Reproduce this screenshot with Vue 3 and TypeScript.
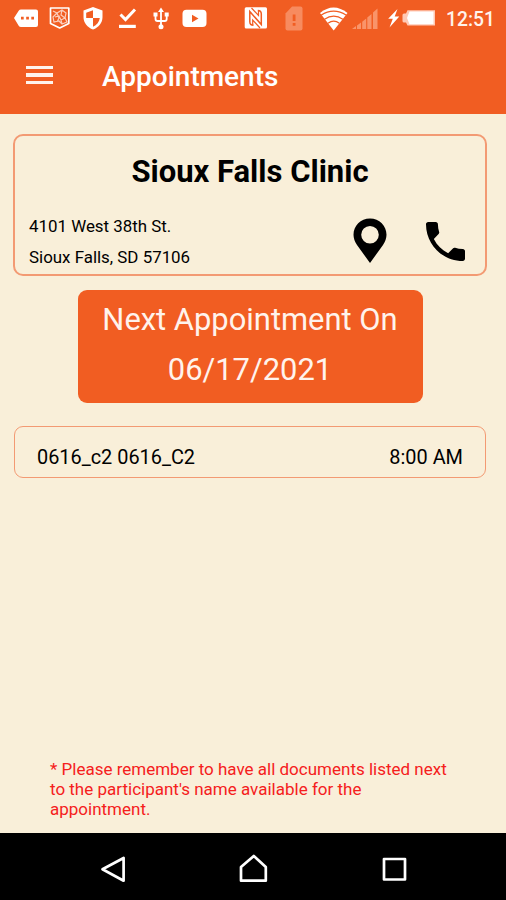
<script setup lang="ts">
import { ref } from 'vue'

interface Clinic {
  name: string
  street: string
  city: string
}

interface Appointment {
  participant: string
  time: string
}

const clinic: Clinic = {
  name: 'Sioux Falls Clinic',
  street: '4101 West 38th St.',
  city: 'Sioux Falls, SD 57106',
}
const nextDate = ref('06/17/2021')
const appointments = ref<Appointment[]>([{ participant: '0616_c2 0616_C2', time: '8:00 AM' }])
</script>

<template>
  <div class="screen">
    <div class="status">
      <div class="status-left">
        <svg width="24" height="38" viewBox="14 0 24 38">
          <path fill="#fff" d="M21 9.500h15a2 2 0 0 1 2 2v13.500a2 2 0 0 1-2 2H21q-1.500 0-2.300-1.300L14 18l4.700-7.200Q19.500 9.500 21 9.500z" />
          <path fill="#f15d22" d="M21 16.700h2.700v2.700H21zM26.200 16.700h2.700v2.700h-2.700zM31.300 16.700H34v2.700h-2.700z" />
        </svg>
        <svg width="22" height="38" viewBox="49 0 22 38">
          <path fill="none" stroke="#fff" stroke-width="1.700" stroke-linejoin="round" d="M50.500 8h18.300v15.500L59.700 28l-9.200-4.500z" />
          <path fill="none" stroke="#fff" stroke-opacity=".7" stroke-width="1.200" d="M53 11l4 2 5-3 4 3-1 5 2 4-5 2-3-3-5 1-1-5 4-4M57 13l2 5-2 4M62 10l-1 5 4 3-4 2-2-4-4 1M61 20l1 4" />
        </svg>
        <svg width="20" height="38" viewBox="83 0 20 38">
          <path fill="#fff" d="M93 7l9.500 3.500V17c0 6-4 10.500-9.500 12.500C87.500 27.500 83.500 23 83.500 17v-6.500z" />
          <path fill="#f15d22" d="M93 10.200V18h-6.800v-5.200zM93 18h6.800c-.5 4-3 7-6.800 8.700z" />
        </svg>
        <svg width="20" height="38" viewBox="118 0 20 38">
          <path fill="none" stroke="#fff" stroke-width="3" d="M120.500 14.500l5 5 9.500-10" />
          <path fill="#fff" d="M119 24.800h16.800V28H119z" />
        </svg>
        <svg width="17" height="38" viewBox="153 0 17 38">
          <path fill="none" stroke="#fff" stroke-width="1.800" d="M161 10v17M155.500 14.500V19q0 2 2 2h7.200q2 0 2-2v-4" />
          <path fill="#fff" d="M161 7.500l3 4.500h-6z M153.500 12.500h4v4h-4zM164.700 12.500h4v4h-4z" />
          <circle cx="161" cy="26.800" r="2.500" fill="#fff" />
        </svg>
        <svg width="25" height="38" viewBox="182 0 25 38">
          <rect x="182.500" y="9.700" width="24" height="17.300" rx="4" fill="#fff" />
          <path fill="#f15d22" d="M192 14.700v7.600l6.500-3.800z" />
        </svg>
      </div>
      <div class="status-right">
        <svg width="23" height="38" viewBox="244 0 23 38">
          <rect x="244.700" y="7.200" width="22.300" height="21.300" rx="1.500" fill="#fff" />
          <path fill="none" stroke="#f15d22" stroke-width="1.500" d="M253.500 25.300q-3.700 0-3.700-3.500V11.500l11.500 13V14q0-3.500-3.500-3.500" />
          <path fill="none" stroke="#f15d22" stroke-width="1.200" d="M251.500 8l7 7.500v-5M260 28l-7.300-8v5" />
        </svg>
        <svg class="sim" width="18" height="38" viewBox="285 0 18 38">
          <path fill="#f78b5f" d="M292 6.500h8.500q2 0 2 2v20q0 2-2 2h-13q-2 0-2-2v-15z" />
          <path fill="#f15d22" d="M292.700 14.500h2.800v6.500h-2.800zM292.700 23h2.800v2.700h-2.800z" />
        </svg>
        <svg class="wifi" width="28" height="38" viewBox="320 0 28 38">
          <path fill="#fff" d="M320 13q13.500-11 27.500 0L333.700 30.500z" />
          <path fill="none" stroke="#f15d22" stroke-width="1.200" d="M321 15.200q12.700-8 25.400 0M324.500 19.300q9.200-6.400 18.400 0M328 23.300q5.700-4.300 11.400 0" />
        </svg>
        <svg class="signal" width="27" height="38" viewBox="352 0 27 38">
          <path fill="#f9946a" d="M352 29h4v-3zM357 29h4v-6.500l-4 3zM362.200 29h4V18.500l-4 3.300zM367.300 29h4.200V14l-4.200 3.600zM373 29h4.500V8.500l-4.500 4z" />
        </svg>
        <svg class="bolt" width="13" height="38" viewBox="388 0 13 38">
          <path fill="#fff" d="M397.500 9l-9.300 9.700h4.600L389.500 27.500l9.800-11h-4.600z" />
        </svg>
        <svg class="battery" width="33" height="38" viewBox="402 0 33 38">
          <path fill="#ffc9b5" d="M407.500 10.200H435V25.500h-27.500l-1.500-3h-2q-1.500 0-1.500-1.500v-6q0-1.500 1.500-1.500h2z" />
          <path fill="#fff" d="M409.500 11.500h24v12.700h-24l-2.500-6.200z" />
        </svg>
        <span class="clock">12:51</span>
      </div>
    </div>

    <header class="appbar">
      <button class="menu" type="button"><span></span><span></span><span></span></button>
      <h1>Appointments</h1>
    </header>

    <main class="content">
      <section class="clinic">
        <h2>{{ clinic.name }}</h2>
        <div class="details">
          <address>
            <span class="street">{{ clinic.street }}</span>
            <span class="city">{{ clinic.city }}</span>
          </address>
          <div class="actions">
            <svg width="34" height="46" viewBox="0 0 34 46">
              <path fill-rule="evenodd" d="M17 .5C7.600.5.500 7.700.500 16.800c0 3.500 1.300 7 3.500 10.200L17 45l13-18c2.200-3.200 3.500-6.700 3.500-10.200C33.500 7.700 26.400.5 17 .5zM17 8a8.800 8.800 0 1 1 0 17.600A8.800 8.800 0 0 1 17 8z" />
            </svg>
            <svg width="39" height="39" viewBox="3 3 18 18">
              <path d="M6.620 10.790c1.440 2.830 3.760 5.140 6.590 6.590l2.200-2.200c.27-.27.670-.36 1.020-.24 1.120.37 2.330.57 3.570.57.550 0 1 .45 1 1V20c0 .55-.45 1-1 1-9.390 0-17-7.610-17-17 0-.55.45-1 1-1h3.500c.55 0 1 .45 1 1 0 1.250.2 2.450.57 3.570.11.350.03.740-.25 1.020l-2.200 2.200z" />
            </svg>
          </div>
        </div>
      </section>

      <section class="next">
        <span class="next-label">Next Appointment On</span>
        <span class="next-date">{{ nextDate }}</span>
      </section>

      <ul class="list">
        <li v-for="item in appointments" :key="item.participant">
          <span class="participant">{{ item.participant }}</span>
          <span class="time">{{ item.time }}</span>
        </li>
      </ul>

      <p class="note">* Please remember to have all documents listed next<br />to the participant's name available for the<br />appointment.</p>
    </main>

    <nav class="navbar">
      <svg width="28" height="30" viewBox="0 0 28 30">
        <path d="M24.600 4v22.700L3.500 15.300z" />
      </svg>
      <svg width="30" height="30" viewBox="0 0 30 30">
        <path d="M2 26.700V13L14.800 2l12 11v13.700z" />
      </svg>
      <svg width="26" height="30" viewBox="0 0 26 30">
        <path d="M3 5h21v20.500H3z" />
      </svg>
    </nav>
  </div>
</template>

<style>
body {
  margin: 0;
}
</style>

<style scoped>
.screen {
  display: flex;
  flex-direction: column;
  width: 506px;
  height: 900px;
  overflow: hidden;
  background: #f9efd9;
  color: #000;
  font-family: Roboto, "Liberation Sans", sans-serif;
}
svg {
  display: block;
  flex: none;
}
span,
h1,
h2 {
  white-space: nowrap;
}
.status {
  display: flex;
  flex: none;
  justify-content: space-between;
  height: 38px;
  padding: 0 11px 0 14px;
  background: #f15d22;
}
.status-left {
  display: flex;
  gap: 13px;
}
.status-left svg:nth-child(1) { margin-right: -2px; }
.status-left svg:nth-child(2) { margin-right: -1px; }
.status-left svg:nth-child(3) { margin-right: 2px; }
.status-left svg:nth-child(4) { margin-right: 2px; }
.status-left svg:nth-child(5) { margin-right: -1px; }
.status-right {
  display: flex;
}
.sim { margin-left: 18px; }
.wifi { margin-left: 17px; }
.signal { margin-left: 4px; }
.bolt { margin-left: 9px; }
.battery { margin-left: 1px; }
.clock {
  width: 49px;
  margin-left: 11px;
  color: #fff3ec;
  font-size: 19.300px;
  font-weight: 500;
  line-height: 39px;
}
.appbar {
  display: flex;
  flex: none;
  align-items: center;
  height: 76px;
  background: #f15d22;
  color: #fff;
}
.menu {
  display: grid;
  gap: 4px;
  width: 27px;
  margin: 0 0 2px 26px;
  padding: 0;
  border: 0;
  background: none;
}
.menu span {
  height: 3.500px;
  background: #fff3ec;
}
h1 {
  margin: 1px 0 0 49px;
  font-size: 28px;
  font-weight: 500;
  line-height: 32px;
}
.content {
  display: flex;
  flex: 1;
  flex-direction: column;
  padding: 20px 19px 0 13px;
}
.clinic {
  box-sizing: border-box;
  height: 142px;
  border: 2px solid #f39a73;
  border-radius: 10px;
}
h2 {
  margin: 19px 0 0;
  font-size: 31px;
  font-weight: 700;
  line-height: 34px;
  text-align: center;
}
.details {
  display: flex;
  justify-content: space-between;
  padding: 21px 20px 0 14px;
}
address {
  display: grid;
  grid-template-rows: 31px 31px;
  padding-top: 1px;
  font-size: 16.900px;
  font-style: normal;
  line-height: 31px;
}
.actions {
  display: flex;
  gap: 39px;
  align-items: center;
  height: 62px;
}
.next {
  display: flex;
  flex-direction: column;
  align-items: center;
  align-self: center;
  box-sizing: border-box;
  width: 345px;
  height: 113px;
  margin-top: 14px;
  padding-top: 5px;
  border-radius: 9px;
  background: #f15d22;
  color: #fff3ec;
  font-size: 30.900px;
  line-height: 49.500px;
}
.list {
  margin: 23px 1px 0;
  padding: 0;
  list-style: none;
}
.list li {
  display: flex;
  justify-content: space-between;
  box-sizing: border-box;
  height: 52px;
  padding: 10px 22px 0;
  border: 1.500px solid #f39a73;
  border-radius: 9px;
  font-size: 19.900px;
  line-height: 42px;
}
.note {
  margin: auto 0 14px 37px;
  color: #f5201c;
  font-size: 17px;
  line-height: 20px;
  white-space: nowrap;
}
.navbar {
  display: flex;
  flex: none;
  justify-content: space-between;
  align-items: flex-start;
  height: 67px;
  box-sizing: border-box;
  padding: 21px 99px 0 99px;
  background: #000;
}
.navbar path {
  fill: none;
  stroke: #fff;
  stroke-width: 2.700;
  stroke-linejoin: round;
}
</style>
